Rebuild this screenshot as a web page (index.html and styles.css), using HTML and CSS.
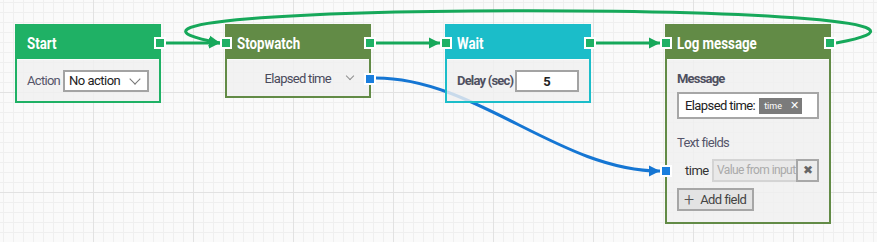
FILE: index.html
```html
<!DOCTYPE html>
<html>
<head>
<meta charset="utf-8">
<link rel="stylesheet" href="styles.css">
</head>
<body>
<div class="canvas">
  <svg class="wires" width="877" height="242" viewBox="0 0 877 242">
    <defs>
      <marker id="ag" markerWidth="12" markerHeight="12" refX="11" refY="6" orient="auto" markerUnits="userSpaceOnUse">
        <path d="M0,0.5 L11,6 L0,11.5 z" fill="#16a85a"/>
      </marker>
      <marker id="ab" markerWidth="12" markerHeight="12" refX="11" refY="6" orient="auto" markerUnits="userSpaceOnUse">
        <path d="M0,0.5 L11,6 L0,11.5 z" fill="#1576d3"/>
      </marker>
    </defs>
    <path class="wire green" d="M166 43 H220" marker-end="url(#ag)"/>
    <path class="wire green" d="M376 43 H440" marker-end="url(#ag)"/>
    <path class="wire green" d="M596 43 H660" marker-end="url(#ag)"/>
    <path class="wire green" d="M836 43 C1076 0, -19 0, 220 43" marker-end="url(#ag)"/>
    <path class="wire blue" d="M376 78 C476 78, 560 171, 660 171" marker-end="url(#ab)"/>
  </svg>

  <div class="node node-start">
    <div class="head green-head"><span class="title">Start</span></div>
    <div class="body row">
      <span class="label">Action</span>
      <div class="select"><span>No action</span><span class="chev"></span></div>
    </div>
    <span class="port out g"></span>
  </div>

  <div class="node node-stop">
    <div class="head olive-head"><span class="title">Stopwatch</span></div>
    <div class="body row end">
      <span class="label mid">Elapsed time</span>
      <span class="chev small"></span>
    </div>
    <span class="port in g"></span>
    <span class="port out g"></span>
    <span class="port out2 b"></span>
  </div>

  <div class="node node-wait">
    <div class="head teal-head"><span class="title">Wait</span></div>
    <div class="body row">
      <span class="label bold">Delay (sec)</span>
      <div class="num">5</div>
    </div>
    <span class="port in g"></span>
    <span class="port out g"></span>
  </div>

  <div class="node node-log">
    <div class="head olive-head"><span class="title">Log message</span></div>
    <div class="body col">
      <span class="label bold">Message</span>
      <div class="msg">Elapsed time:<span class="chip">time<span class="x">✕</span></span></div>
      <span class="label tf">Text fields</span>
      <div class="field-row">
        <span class="fname">time</span>
        <div class="finput">Value from input</div>
        <div class="fdel">✖</div>
      </div>
      <div class="add"><span class="plus">+</span>Add field</div>
    </div>
    <span class="port in g"></span>
    <span class="port out g"></span>
    <span class="port in2 b"></span>
  </div>
</div>
</body>
</html>
```

FILE: styles.css
```css
html, body { margin: 0; padding: 0; }
body { font-family: Roboto, "Liberation Sans", sans-serif; }

.canvas {
  position: relative;
  width: 877px;
  height: 242px;
  overflow: hidden;
  background-color: #fafafa;
  background-image:
    linear-gradient(#e2e2e2 1px, transparent 1px),
    linear-gradient(90deg, #e2e2e2 1px, transparent 1px),
    linear-gradient(#efefef 1px, transparent 1px),
    linear-gradient(90deg, #efefef 1px, transparent 1px);
  background-size: 100px 100px, 100px 100px, 10px 10px, 10px 10px;
  background-position: 0 92px, 93px 0, 0 2px, 3px 0;
}

.wires { position: absolute; left: 0; top: 0; }
.wire { fill: none; stroke-width: 3; }
.wire.green { stroke: #16a85a; }
.wire.blue { stroke: #1576d3; }

.node {
  position: absolute;
  top: 24px;
  width: 142px;
  border: 2px solid;
  box-sizing: content-box;
}
.node-start { left: 15px; border-color: #1fb165; }
.node-stop { left: 225px; border-color: #628b46; }
.node-wait { left: 445px; border-color: #1bbdc9; }
.node-log { left: 665px; width: 162px; border-color: #628b46; }

.head {
  height: 33px;
  line-height: 36px;
  padding-left: 10px;
  color: #fff;
  font-weight: bold;
  font-size: 16px;
  white-space: nowrap;
}
.title {
  display: inline-block;
  transform: scaleX(0.83);
  transform-origin: left center;
}
.green-head { background: #1fb165; }
.olive-head { background: #628b46; }
.teal-head { background: #1bbdc9; }

.body {
  background: rgba(240, 240, 240, 0.82);
  border-top: 1px solid #fbfbfb;
  padding: 0 10px;
}
.row { display: flex; align-items: center; justify-content: space-between; }
.node-start .body, .node-wait .body { height: 41px; }
.node-stop .body { height: 36px; }
.end { justify-content: flex-end; gap: 16px; padding-right: 16px; }

.label { font-size: 13px; color: #55556a; letter-spacing: -0.7px; white-space: nowrap; }
.label.bold { font-weight: bold; color: #4f5060; letter-spacing: -0.8px; }
.label.mid { color: #4a4a5c; }

.select {
  flex: none;
  width: 86px;
  height: 22px;
  box-sizing: border-box;
  border: 2px solid #a3a3a3;
  background: #fff;
  display: flex;
  align-items: center;
  justify-content: space-between;
  padding: 0 8px 0 4px;
  font-size: 13px;
  letter-spacing: -0.5px;
  color: #222;
}
.chev {
  width: 7px;
  height: 7px;
  border-right: 1.5px solid #777;
  border-bottom: 1.5px solid #777;
  transform: translateY(-2px) rotate(45deg);
}
.chev.small { width: 5px; height: 5px; border-color: #8f8f8f; }

.num {
  flex: none;
  width: 64px;
  height: 22px;
  box-sizing: border-box;
  border: 2px solid #a3a3a3;
  background: #fff;
  text-align: center;
  line-height: 19px;
  font-size: 13px;
  font-weight: bold;
  color: #222;
}

.col { display: flex; flex-direction: column; align-items: flex-start; padding-bottom: 11px; }
.col > .label.bold { margin-top: 11px; }
.msg {
  margin-top: 6px;
  width: 142px;
  height: 27px;
  box-sizing: border-box;
  border: 2px solid #a6a6a6;
  background: #fff;
  display: flex;
  align-items: center;
  padding-left: 6px;
  font-size: 13px;
  color: #222;
  letter-spacing: -0.6px;
  white-space: nowrap;
}
.chip {
  margin-left: 4px;
  height: 16px;
  width: 43px;
  box-sizing: border-box;
  background: #7b7b7b;
  color: #fff;
  font-size: 9px;
  letter-spacing: 0;
  display: flex;
  align-items: center;
  padding-left: 5px;
  gap: 8px;
}
.chip .x { font-size: 11px; }
.label.tf { margin-top: 16px; }
.field-row {
  margin-top: 9px;
  display: flex;
  align-items: center;
  width: 142px;
}
.fname { flex: none; font-size: 13px; color: #333; width: 35px; padding-left: 8px; box-sizing: border-box; letter-spacing: -0.5px; }
.finput {
  flex: none;
  width: 84px;
  height: 23px;
  box-sizing: border-box;
  border: 2px solid #d4d4d4;
  border-right: none;
  background: #e9e9e9;
  color: #aaa;
  font-size: 12px;
  letter-spacing: -0.6px;
  line-height: 19px;
  padding-left: 3px;
  white-space: nowrap;
}
.fdel {
  flex: none;
  width: 23px;
  height: 23px;
  box-sizing: border-box;
  border: 2px solid #a8a8a8;
  background: #ececec;
  color: #666;
  font-size: 12px;
  text-align: center;
  line-height: 19px;
}
.add {
  margin-top: 6px;
  width: 77px;
  height: 23px;
  box-sizing: border-box;
  border: 2px solid #a6a6a6;
  background: #e3e3e3;
  color: #444;
  font-size: 13px;
  letter-spacing: -0.6px;
  display: flex;
  align-items: center;
}
.plus { font-size: 18px; font-weight: 300; margin: 0 6px 0 5px; line-height: 19px; color: #555; letter-spacing: 0; }

.port {
  position: absolute;
  width: 8px;
  height: 8px;
  border: 2px solid #fff;
  top: 11px;
}
.port.g { background: #1fb165; }
.port.b { background: #1a7ede; }
.port.in { left: -7px; }
.port.out { right: -7px; }
.port.out2 { right: -7px; top: 47px; }
.port.in2 { left: -7px; top: 139px; }
```
